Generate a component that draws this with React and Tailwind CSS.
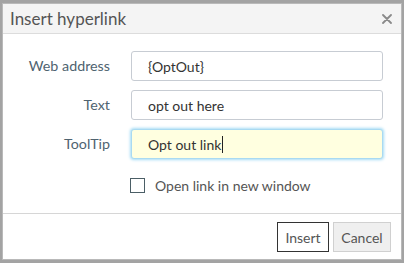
export default function App() {
  const font = { fontFamily: 'Lato, "Open Sans", sans-serif' };
  return (
    <div className="w-[404px] h-[263px] bg-[#a3a3a3] pt-[3px] pl-[2px] pr-[2px] pb-[3px] overflow-hidden" style={font}>
      <div className="w-[400px] h-[257px] bg-white border border-[#b9b9b9] flex flex-col">
        {/* Title bar */}
        <div className="h-[30px] shrink-0 bg-[#f4f4f4] border-b border-[#dcdcdc] flex items-center justify-between pl-[7px] pr-[9px]">
          <span className="text-[17px] text-[#555] leading-none">Insert hyperlink</span>
          <svg viewBox="0 0 10 10" className="w-[10px] h-[10px]" stroke="#8a8a8a" strokeWidth="1.8" strokeLinecap="round">
            <path d="M1 1l8 8M9 1l-8 8" />
          </svg>
        </div>

        {/* Form */}
        <div className="flex-1 pt-[17px]">
          <div className="grid grid-cols-[107px_252px] gap-x-[21px] gap-y-[9px] items-center">
            <label className="text-right text-[14.3px] text-[#4f6370]">Web address</label>
            <div className="h-[30px] border border-[#c7ccd3] rounded-[3px] flex items-center pl-[16px] text-[14px] text-[#333]">{'{OptOut}'}</div>
            <label className="text-right text-[14.3px] text-[#4f6370]">Text</label>
            <div className="h-[30px] border border-[#c7ccd3] rounded-[3px] flex items-center pl-[16px] text-[14px] text-[#333]">opt out here</div>
            <label className="text-right text-[14.3px] text-[#4f6370]">ToolTip</label>
            <div className="h-[30px] border border-[#a9daf2] bg-[#ffffe0] rounded-[3px] flex items-center pl-[16px] text-[14px] text-[#333] shadow-[0_0_3px_1px_#a6dcf5]">
              Opt out link<span className="w-px h-[17px] bg-[#222] ml-px" />
            </div>
          </div>
          <div className="flex items-center gap-[10px] pl-[127px] mt-[16px]">
            <span className="w-[15px] h-[15px] border border-[#4b5e66] bg-white" />
            <span className="text-[14px] text-[#555]">Open link in new window</span>
          </div>
        </div>

        {/* Footer */}
        <div className="h-[46px] shrink-0 border-t border-[#d6d6d6] flex items-start justify-end gap-[4px] pt-[8px] pr-[10px]">
          <button className="h-[30px] w-[52px] border border-[#333] bg-white text-[14px] text-[#555]">Insert</button>
          <button className="h-[30px] w-[58px] border border-[#d0d0d0] bg-[#efefef] text-[14px] text-[#555]">Cancel</button>
        </div>
      </div>
    </div>
  );
}
